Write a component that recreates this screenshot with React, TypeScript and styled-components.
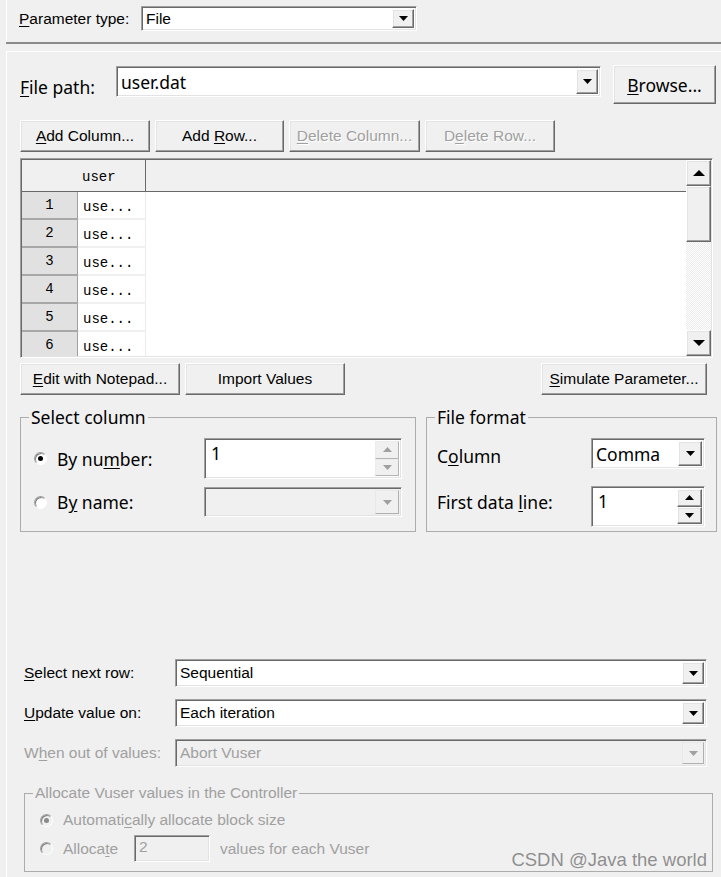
import React from "react";
import styled, { createGlobalStyle, css } from "styled-components";

const CLASSIC = `"Liberation Sans", Arial, sans-serif`;
const SEGOE = `"Noto Sans", "Open Sans", sans-serif`;
const MONO = `"Liberation Mono", "DejaVu Sans Mono", monospace`;

const GlobalStyle = createGlobalStyle`
  html, body {
    margin: 0;
    padding: 0;
    background: #f0f0f0;
  }
`;

const sunken = css`
  box-sizing: border-box;
  border: 1px solid;
  border-color: #a0a0a0 #ffffff #ffffff #a0a0a0;
  box-shadow: inset 1px 1px 0 #696969, inset -1px -1px 0 #e3e3e3;
`;

const raised = css`
  box-sizing: border-box;
  border: 1px solid;
  border-color: #ffffff #696969 #696969 #ffffff;
  box-shadow: inset -1px -1px 0 #a0a0a0, inset 1px 1px 0 #e3e3e3;
  background: #f0f0f0;
`;

const Page = styled.div`
  position: relative;
  width: 721px;
  height: 877px;
  overflow: hidden;
  background: #f0f0f0;
  color: #000;
  font-family: ${CLASSIC};
  font-size: 15.5px;
  display: flex;
  flex-direction: column;
`;

const TopBar = styled.div`
  height: 42px;
  flex: none;
  box-sizing: border-box;
  margin-left: 6px;
  border-left: 1px solid #fff;
  padding: 6px 0 0 12px;
  display: flex;
  align-items: flex-start;
`;

const Separator = styled.div`
  height: 2px;
  flex: none;
  margin-left: 6px;
  background: #8a8a8a;
`;

const Panel = styled.div`
  flex: 1;
  margin: 7px 0 0 6px;
  border-top: 1px solid #fff;
  border-left: 1px solid #fff;
  display: flex;
  flex-direction: column;
`;

const Label = styled.span<{ $w?: number; $seg?: boolean; $off?: boolean; $lh?: number; $dy?: number }>`
  flex: none;
  width: ${(p) => (p.$w ? `${p.$w}px` : "auto")};
  font-family: ${(p) => (p.$seg ? SEGOE : CLASSIC)};
  font-size: ${(p) => (p.$seg ? "17.5px" : "15.5px")};
  line-height: ${(p) => (p.$lh ? `${p.$lh}px` : "normal")};
  color: ${(p) => (p.$off ? "#a0a0a0" : "#000")};
  white-space: nowrap;
  position: relative;
  top: ${(p) => p.$dy ?? 0}px;

  u {
    text-underline-offset: 2px;
  }
`;

const Combo = styled.div<{ $w?: number; $h: number; $off?: boolean }>`
  ${sunken};
  display: flex;
  flex: ${(p) => (p.$w ? "none" : "1")};
  width: ${(p) => (p.$w ? `${p.$w}px` : "auto")};
  height: ${(p) => p.$h}px;
  padding: 2px;
  background: ${(p) => (p.$off ? "#f0f0f0" : "#fff")};
`;

const ComboValue = styled.div<{ $seg?: boolean; $off?: boolean }>`
  flex: 1;
  display: flex;
  align-items: center;
  padding-left: 2px;
  overflow: hidden;
  white-space: nowrap;
  font-family: ${(p) => (p.$seg ? SEGOE : CLASSIC)};
  font-size: ${(p) => (p.$seg ? "17.5px" : "15.5px")};
  color: ${(p) => (p.$off ? "#a0a0a0" : "#000")};
`;

const DropButton = styled.div<{ $w?: number; $off?: boolean }>`
  ${raised};
  flex: none;
  width: ${(p) => p.$w ?? 21}px;
  display: flex;
  align-items: center;
  justify-content: center;
  ${(p) =>
    p.$off &&
    css`
      border-color: #e8e8e8 #b0b0b0 #b0b0b0 #e8e8e8;
      box-shadow: none;
    `}
`;

const Spin = styled.div<{ $w: number; $h: number }>`
  ${sunken};
  display: flex;
  flex: none;
  width: ${(p) => p.$w}px;
  height: ${(p) => p.$h}px;
  padding: 2px;
  background: #fff;
`;

const SpinValue = styled.div`
  flex: 1;
  padding: 1px 0 0 4px;
  font-family: ${SEGOE};
  font-size: 17.5px;
  line-height: 22px;
`;

const SpinButtons = styled.div<{ $w: number }>`
  flex: none;
  width: ${(p) => p.$w}px;
  display: flex;
  flex-direction: column;
`;

const SpinButton = styled.div<{ $off?: boolean }>`
  ${raised};
  flex: 1;
  display: flex;
  align-items: center;
  justify-content: center;
  ${(p) =>
    p.$off &&
    css`
      border-color: #ececec #b4b4b4 #b4b4b4 #ececec;
      box-shadow: none;
    `}
`;

const Button = styled.button<{ $w: number; $h?: number; $seg?: boolean; $off?: boolean }>`
  ${raised};
  flex: none;
  width: ${(p) => p.$w}px;
  height: ${(p) => p.$h ?? 32}px;
  padding: 0;
  margin: 0;
  display: flex;
  align-items: center;
  justify-content: center;
  font-family: ${(p) => (p.$seg ? SEGOE : CLASSIC)};
  font-size: ${(p) => (p.$seg ? "17.5px" : "15.5px")};
  color: ${(p) => (p.$off ? "#a0a0a0" : "#000")};
  text-shadow: ${(p) => (p.$off ? "1px 1px 0 #fff" : "none")};
  white-space: nowrap;

  u {
    text-underline-offset: 2px;
  }
`;

const FilePathRow = styled.div`
  margin-top: 13px;
  height: 39px;
  padding: 0 5px 0 13px;
  display: flex;
  align-items: center;

  & > ${Combo} {
    margin-right: 12px;
    margin-bottom: 6px;
  }
`;

const ToolRow = styled.div`
  margin-top: 16px;
  padding-left: 13px;
  display: flex;
  gap: 5px;
`;

const Grid = styled.div`
  ${sunken};
  margin: 6px 8px 0 13px;
  height: 200px;
  flex: none;
  padding: 1px;
  display: flex;
  background: #fff;
`;

const Sheet = styled.div`
  flex: 1;
  min-width: 0;
  display: flex;
  flex-direction: column;
  overflow: hidden;
`;

const HeaderRow = styled.div`
  flex: none;
  height: 32px;
  box-sizing: border-box;
  background: #f0f0f0;
  border-bottom: 1px solid #696969;
  display: flex;
`;

const HeaderCell = styled.div`
  width: 124px;
  box-sizing: border-box;
  border-right: 1px solid #696969;
  padding: 2px 0 0 60px;
  display: flex;
  align-items: center;
  font-family: ${MONO};
  font-size: 14px;
`;

const Row = styled.div`
  flex: none;
  height: 28px;
  display: flex;
`;

const RowHead = styled.div`
  width: 56px;
  box-sizing: border-box;
  background: #e1e1e1;
  border-right: 1px solid #a0a0a0;
  border-bottom: 2px solid #a8a8a8;
  display: flex;
  align-items: center;
  justify-content: center;
  padding-bottom: 1px;
  font-family: ${MONO};
  font-size: 14px;
`;

const Cell = styled.div`
  width: 68px;
  box-sizing: border-box;
  border-right: 1px solid #ececec;
  border-bottom: 2px solid #f0f0f0;
  padding: 3px 0 0 5px;
  display: flex;
  align-items: center;
  font-family: ${MONO};
  font-size: 14px;
`;

const ScrollBar = styled.div`
  flex: none;
  width: 25px;
  display: flex;
  flex-direction: column;
`;

const ScrollButton = styled.div<{ $h: number }>`
  ${raised};
  flex: none;
  height: ${(p) => p.$h}px;
  display: flex;
  align-items: center;
  justify-content: center;
`;

const ScrollTrack = styled.div`
  flex: 1;
  background-color: #fff;
  background-image: repeating-conic-gradient(#ececec 0 25%, #ffffff 0 50%);
  background-size: 2px 2px;
`;

const ActionRow = styled.div`
  margin-top: 5px;
  padding: 0 14px 0 13px;
  display: flex;
  gap: 5px;
`;

const Spacer = styled.div`
  flex: 1;
`;

const GroupRow = styled.div`
  margin-top: 12px;
  padding-left: 13px;
  display: flex;
  gap: 10px;
  align-items: flex-start;
`;

const Group = styled.fieldset<{ $w?: number }>`
  box-sizing: border-box;
  width: ${(p) => (p.$w ? `${p.$w}px` : "auto")};
  min-width: 0;
  margin: 0;
  padding: 0;
  border: 1px solid #acacac;
`;

const GroupTitle = styled.legend<{ $seg?: boolean; $off?: boolean }>`
  margin-left: 8px;
  padding: 0 2px;
  font-family: ${(p) => (p.$seg ? SEGOE : CLASSIC)};
  font-size: ${(p) => (p.$seg ? "17.5px" : "15.5px")};
  line-height: ${(p) => (p.$seg ? "20px" : "18px")};
  color: ${(p) => (p.$off ? "#a0a0a0" : "#000")};
`;

const GroupBody = styled.div<{ $pad: string }>`
  padding: ${(p) => p.$pad};
  display: flex;
  flex-direction: column;
`;

const OptionRow = styled.div<{ $top?: number }>`
  display: flex;
  align-items: center;
  gap: 10px;
  margin-top: ${(p) => p.$top ?? 0}px;

  & > ${Label} + * {
    margin-left: -10px;
  }
`;

const Radio = styled.span<{ $on?: boolean; $off?: boolean }>`
  position: relative;
  flex: none;
  width: 13px;
  height: 13px;
  box-sizing: border-box;
  border-radius: 50%;
  border: 1px solid;
  border-color: #a0a0a0 #ffffff #ffffff #a0a0a0;
  background: ${(p) => (p.$off ? "#f0f0f0" : "#fff")};
  box-shadow: inset 1px 1px 0 #808080;

  &::after {
    content: "";
    display: ${(p) => (p.$on ? "block" : "none")};
    position: absolute;
    left: 3px;
    top: 3px;
    width: 5px;
    height: 5px;
    border-radius: 50%;
    background: ${(p) => (p.$off ? "#8a8a8a" : "#000")};
  }
`;

const FieldList = styled.div`
  margin-top: 127px;
  padding: 0 14px 0 17px;
  display: flex;
  flex-direction: column;
  gap: 12px;
`;

const FieldRow = styled.div`
  height: 28px;
  display: flex;
  align-items: center;
`;

const AllocateGroup = styled(Group)`
  margin: 17px 8px 0 17px;
`;

const SmallInput = styled.div`
  ${sunken};
  flex: none;
  width: 76px;
  height: 27px;
  padding: 2px 0 0 4px;
  background: #f0f0f0;
  color: #a0a0a0;
  font-size: 15.5px;
`;

const Watermark = styled.div`
  position: absolute;
  right: 14px;
  bottom: 6px;
  font-family: ${CLASSIC};
  font-size: 18.5px;
  color: rgba(110, 110, 110, 0.75);
  white-space: nowrap;
`;

const Arrow = ({ up, off, w = 9, h = 5 }: { up?: boolean; off?: boolean; w?: number; h?: number }) => (
  <svg width={w} height={h} viewBox={`0 0 ${w} ${h}`}>
    <polygon
      points={up ? `0,${h} ${w},${h} ${w / 2},0` : `0,0 ${w},0 ${w / 2},${h}`}
      fill={off ? "#a0a0a0" : "#000"}
    />
  </svg>
);

const rows = [1, 2, 3, 4, 5, 6];

export default function App() {
  return (
    <Page>
      <GlobalStyle />
      <TopBar>
        <Label $w={122} $lh={25}>
          <u>P</u>arameter type:
        </Label>
        <Combo $w={276} $h={25}>
          <ComboValue>File</ComboValue>
          <DropButton $w={22}>
            <Arrow />
          </DropButton>
        </Combo>
      </TopBar>
      <Separator />
      <Panel>
        <FilePathRow>
          <Label $seg $w={96} $dy={2}>
            <u>F</u>ile path:
          </Label>
          <Combo $h={31}>
            <ComboValue $seg>user.dat</ComboValue>
            <DropButton $w={22}>
              <Arrow />
            </DropButton>
          </Combo>
          <Button $seg $w={103} $h={39}>
            <span>
              <u>B</u>rowse...
            </span>
          </Button>
        </FilePathRow>

        <ToolRow>
          <Button $w={130}>
            <span>
              <u>A</u>dd Column...
            </span>
          </Button>
          <Button $w={129}>
            <span>
              Add <u>R</u>ow...
            </span>
          </Button>
          <Button $w={131} $off>
            <span>
              <u>D</u>elete Column...
            </span>
          </Button>
          <Button $w={130} $off>
            <span>
              D<u>e</u>lete Row...
            </span>
          </Button>
        </ToolRow>

        <Grid>
          <Sheet>
            <HeaderRow>
              <HeaderCell>user</HeaderCell>
            </HeaderRow>
            {rows.map((n) => (
              <Row key={n}>
                <RowHead>{n}</RowHead>
                <Cell>use...</Cell>
              </Row>
            ))}
          </Sheet>
          <ScrollBar>
            <ScrollButton $h={26}>
              <Arrow up w={12} h={6} />
            </ScrollButton>
            <ScrollButton $h={56} />
            <ScrollTrack />
            <ScrollButton $h={26}>
              <Arrow w={12} h={6} />
            </ScrollButton>
          </ScrollBar>
        </Grid>

        <ActionRow>
          <Button $w={160}>
            <span>
              <u>E</u>dit with Notepad...
            </span>
          </Button>
          <Button $w={160}>Import Values</Button>
          <Spacer />
          <Button $w={166}>
            <span>
              <u>S</u>imulate Parameter...
            </span>
          </Button>
        </ActionRow>

        <GroupRow>
          <Group $w={396}>
            <GroupTitle $seg>Select column</GroupTitle>
            <GroupBody $pad="11px 14px 14px 13px">
              <OptionRow>
                <Radio $on />
                <Label $seg $w={147}>
                  By nu<u>m</u>ber:
                </Label>
                <Spin $w={198} $h={41}>
                  <SpinValue>1</SpinValue>
                  <SpinButtons $w={24}>
                    <SpinButton $off>
                      <Arrow up off w={9} h={5} />
                    </SpinButton>
                    <SpinButton $off>
                      <Arrow off w={9} h={5} />
                    </SpinButton>
                  </SpinButtons>
                </Spin>
              </OptionRow>
              <OptionRow $top={8}>
                <Radio />
                <Label $seg $w={147}>
                  B<u>y</u> name:
                </Label>
                <Combo $w={198} $h={30} $off>
                  <ComboValue $seg />
                  <DropButton $w={24} $off>
                    <Arrow off />
                  </DropButton>
                </Combo>
              </OptionRow>
            </GroupBody>
          </Group>

          <Group $w={291}>
            <GroupTitle $seg>File format</GroupTitle>
            <GroupBody $pad="11px 10px 4px 10px">
              <OptionRow>
                <Label $seg $w={154} $dy={2}>
                  C<u>o</u>lumn
                </Label>
                <Combo $w={114} $h={31}>
                  <ComboValue $seg>Comma</ComboValue>
                  <DropButton $w={24}>
                    <Arrow />
                  </DropButton>
                </Combo>
              </OptionRow>
              <OptionRow $top={17}>
                <Label $seg $w={154} $dy={-5}>
                  First data <u>l</u>ine:
                </Label>
                <Spin $w={114} $h={41}>
                  <SpinValue>1</SpinValue>
                  <SpinButtons $w={25}>
                    <SpinButton>
                      <Arrow up w={9} h={5} />
                    </SpinButton>
                    <SpinButton>
                      <Arrow w={9} h={5} />
                    </SpinButton>
                  </SpinButtons>
                </Spin>
              </OptionRow>
            </GroupBody>
          </Group>
        </GroupRow>

        <FieldList>
          <FieldRow>
            <Label $w={151}>
              <u>S</u>elect next row:
            </Label>
            <Combo $h={28}>
              <ComboValue>Sequential</ComboValue>
              <DropButton $w={22}>
                <Arrow />
              </DropButton>
            </Combo>
          </FieldRow>
          <FieldRow>
            <Label $w={151}>
              <u>U</u>pdate value on:
            </Label>
            <Combo $h={28}>
              <ComboValue>Each iteration</ComboValue>
              <DropButton $w={22}>
                <Arrow />
              </DropButton>
            </Combo>
          </FieldRow>
          <FieldRow>
            <Label $w={151} $off>
              W<u>h</u>en out of values:
            </Label>
            <Combo $h={28} $off>
              <ComboValue $off>Abort Vuser</ComboValue>
              <DropButton $w={22} $off>
                <Arrow off />
              </DropButton>
            </Combo>
          </FieldRow>
        </FieldList>

        <AllocateGroup>
          <GroupTitle $off>Allocate Vuser values in the Controller</GroupTitle>
          <GroupBody $pad="9px 10px 9px 15px">
            <OptionRow>
              <Radio $on $off />
              <Label $off>
                Automati<u>c</u>ally allocate block size
              </Label>
            </OptionRow>
            <OptionRow $top={6}>
              <Radio $off />
              <Label $off $w={71}>
                Alloca<u>t</u>e
              </Label>
              <SmallInput>2</SmallInput>
              <Label $off>values for each Vuser</Label>
            </OptionRow>
          </GroupBody>
        </AllocateGroup>
      </Panel>
      <Watermark>CSDN @Java the world</Watermark>
    </Page>
  );
}
